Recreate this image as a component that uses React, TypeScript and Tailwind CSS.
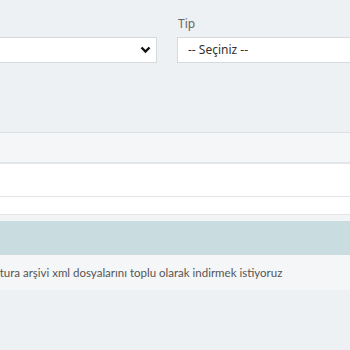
import React from "react";

export default function App() {
  return (
    <div
      className="w-[350px] h-[350px] overflow-hidden bg-[#eef1f3] text-[#555]"
      style={{ fontFamily: '"Noto Sans", "Open Sans", sans-serif' }}
    >
      <div className="flex pt-[15px]">
        <div className="-ml-[10px] w-[167px] shrink-0 flex flex-col">
          <div className="h-[22px]" />
          <div className="h-[26px] bg-white border border-[#d6dadd] flex items-center justify-end pr-[5px]">
            <svg width="11" height="8" viewBox="0 0 11 8">
              <path d="M1.5 1.5 L5.5 5.5 L9.5 1.5" fill="none" stroke="#111" strokeWidth="2.4" />
            </svg>
          </div>
        </div>
        <div className="ml-[20px] w-[220px] shrink-0 flex flex-col">
          <div className="h-[22px] text-[12px] leading-[18px] pl-[1px] text-[#666]">Tip</div>
          <div className="h-[26px] bg-white border border-[#d6dadd] flex items-center pl-[10px] text-[12px] text-[#333]">
            -- Seçiniz --
          </div>
        </div>
      </div>
      <div className="mt-[69px] border-t border-[#dde1e4]">
        <div className="h-[31px] bg-[#f4f6f7] border-b-2 border-[#e3e6e8]" />
        <div className="h-[33px] bg-white border-b border-[#e2e5e7]" />
        <div className="h-[18px] bg-white border-b border-[#e2e5e7]" />
        <div className="h-[6px] bg-[#f2f4f5]" />
        <div className="h-[34px] bg-[#c9dce0]" />
        <div
          className="h-[35px] bg-[#f4f6f7] flex items-center text-[11.5px] text-[#555] whitespace-nowrap"
          style={{ fontFamily: 'Lato, "Noto Sans", sans-serif' }}
        >
          <span className="-ml-[10px]">fatura arşivi xml dosyalarını toplu olarak indirmek istiyoruz</span>
        </div>
      </div>
    </div>
  );
}
